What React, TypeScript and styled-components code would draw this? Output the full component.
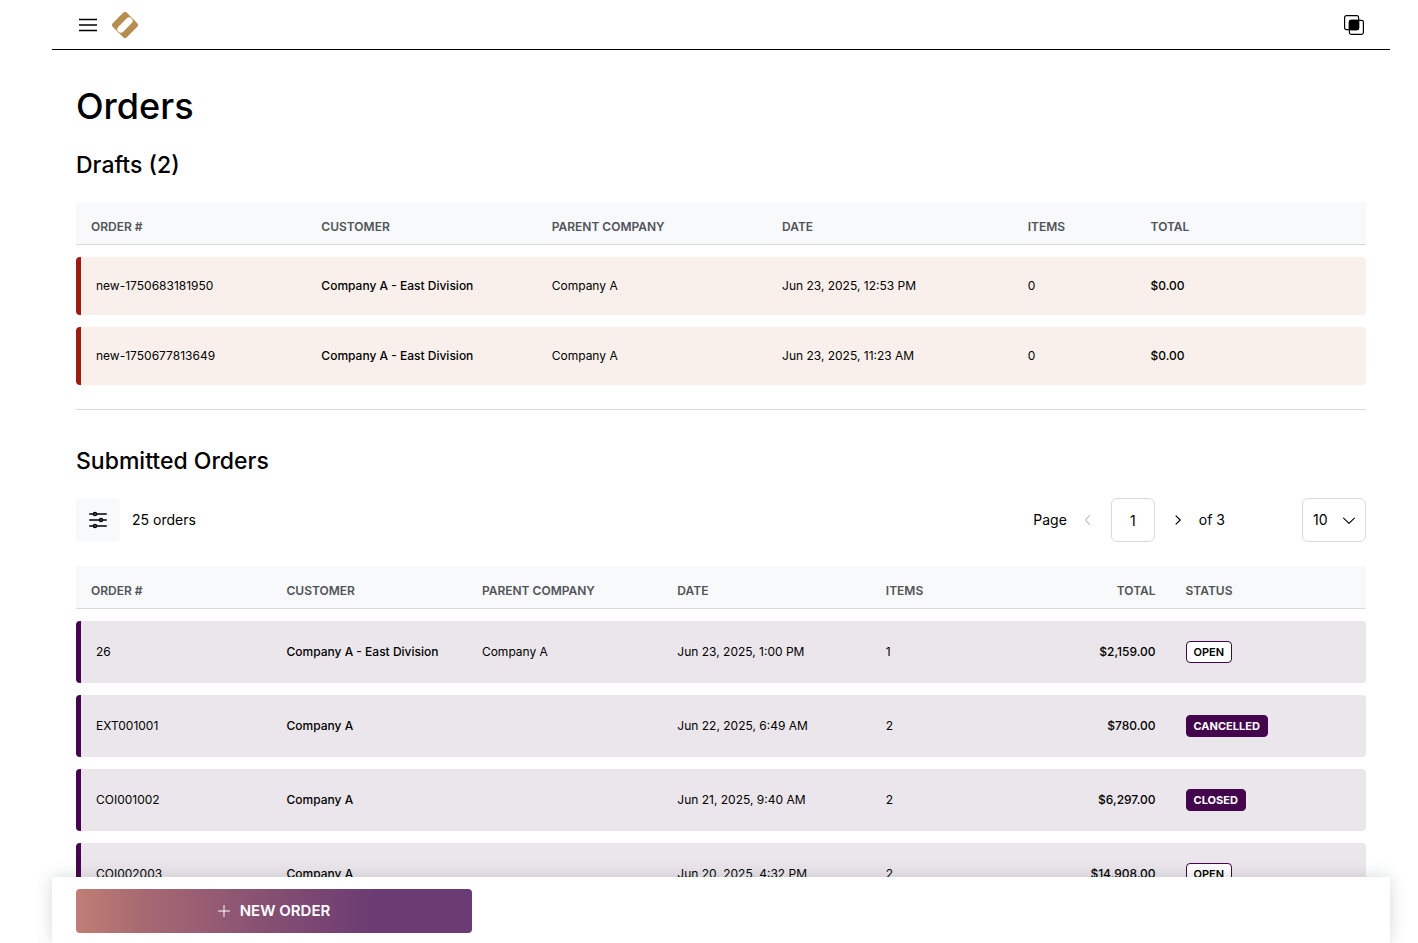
import React from "react";
import styled, { createGlobalStyle, css } from "styled-components";

const GlobalStyle = createGlobalStyle`
  *, *::before, *::after { box-sizing: border-box; }
  body {
    margin: 0;
    background: #fff;
    color: #000;
    font-family: Inter, "Liberation Sans", sans-serif;
    font-size: 14px;
    line-height: 20px;
  }
  button, input, select { font: inherit; color: inherit; }
`;

const Page = styled.div`
  padding: 0 28px 0 52px;
`;

const TopBar = styled.header`
  display: flex;
  align-items: center;
  justify-content: space-between;
  height: 50px;
  padding: 0 24px;
  border-bottom: 1px solid #000;
`;

const BarGroup = styled.div`
  display: flex;
  align-items: center;
  gap: 12px;
`;

const IconButton = styled.button`
  display: flex;
  align-items: center;
  justify-content: center;
  width: 24px;
  height: 24px;
  padding: 0;
  border: 0;
  background: none;
  cursor: pointer;

  &:disabled { color: #b4b6bb; cursor: default; }
`;

const HomeLink = styled.a`
  display: flex;
`;

const Content = styled.main`
  padding: 32px 24px 24px;
`;

const Title = styled.h1`
  margin: 0;
  font-size: 36px;
  font-weight: 500;
  line-height: 48px;
`;

const SectionTitle = styled.h2`
  margin: 18px 0 8px;
  font-size: 23px;
  font-weight: 500;
  line-height: 34px;
`;

const Divider = styled.hr`
  height: 1px;
  margin: 12px 0 34px;
  border: 0;
  background: #d8dae0;
`;

const Toolbar = styled.div`
  display: flex;
  align-items: center;
  justify-content: space-between;
  margin: 20px 0 12px;
`;

const FilterButton = styled(IconButton)`
  width: 44px;
  height: 44px;
  border-radius: 4px;
  background: #f8f9fb;
`;

const Pager = styled.nav`
  display: flex;
  align-items: center;
`;

const PageLabel = styled.label`
  margin-right: 8px;
`;

const PageInput = styled.input`
  width: 44px;
  height: 44px;
  margin: 0 12px;
  padding: 0;
  border: 1px solid #d8dae0;
  border-radius: 6px;
  background: #fff;
  text-align: center;
`;

const PageCount = styled.span`
  margin: 0 77px 0 8px;
`;

const SizeField = styled.div`
  display: grid;
  align-items: center;
  width: 64px;
  height: 44px;

  > * { grid-area: 1 / 1; }
  > svg { justify-self: end; margin-right: 11px; pointer-events: none; }
`;

const SizeSelect = styled.select`
  width: 100%;
  height: 44px;
  padding: 0 10px;
  border: 1px solid #d8dae0;
  border-radius: 6px;
  background: #fff;
  appearance: none;
`;

const Table = styled.table`
  width: 100%;
  table-layout: fixed;
  border-collapse: separate;
  border-spacing: 0 12px;
  font-size: 12px;
`;

const Column = styled.col<{ $width: number }>`
  width: ${(p) => p.$width}%;
`;

const HeadCell = styled.th<{ $right?: boolean }>`
  height: 43px;
  padding: 8px 15px 0;
  border-bottom: 1px solid #d8dae0;
  background: #f8f9fb;
  color: #505358;
  font-weight: 600;
  text-align: ${(p) => (p.$right ? "right" : "left")};
  white-space: nowrap;
`;

type Tone = "draft" | "order";

const tones = {
  draft: css`
    height: 58px;
    background: #faf0eb;
    --accent: #9c1c14;
  `,
  order: css`
    height: 62px;
    background: #ebe6eb;
    --accent: #43054b;
  `,
};

const Cell = styled.td<{ $tone: Tone; $right?: boolean; $strong?: boolean }>`
  ${(p) => tones[p.$tone]}
  padding: 0 15px;
  font-weight: ${(p) => (p.$strong ? 500 : 400)};
  text-align: ${(p) => (p.$right ? "right" : "left")};
  white-space: nowrap;

  &:first-child {
    border-left: 5px solid var(--accent);
    border-radius: 4px 0 0 4px;
  }
  &:last-child { border-radius: 0 4px 4px 0; }
`;

const Badge = styled.span<{ $filled: boolean }>`
  display: inline-block;
  padding: 0 7px;
  border: 1px solid #43054b;
  border-radius: 4px;
  background: ${(p) => (p.$filled ? "#43054b" : "#fff")};
  color: ${(p) => (p.$filled ? "#fff" : "#000")};
  font-size: 11px;
  font-weight: ${(p) => (p.$filled ? 700 : 600)};
  line-height: 20px;
  vertical-align: middle;
`;

const ActionBar = styled.footer`
  position: fixed;
  right: 28px;
  bottom: 0;
  left: 52px;
  padding: 12px 24px 10px;
  background: #fff;
  box-shadow: 0 0 16px rgba(50, 70, 70, 0.2);
`;

const NewOrderButton = styled.button`
  display: flex;
  align-items: center;
  justify-content: center;
  gap: 10px;
  width: 100%;
  max-width: 396px;
  height: 44px;
  padding: 0;
  border: 0;
  border-radius: 4px;
  background: linear-gradient(90deg, #c17e75 0%, #a86a72 16%, #6b3b73 75%);
  color: #fff;
  font-size: 15px;
  font-weight: 600;
  cursor: pointer;
`;

interface Draft {
  id: string;
  customer: string;
  parent: string;
  date: string;
  items: number;
  total: string;
}

interface Order extends Draft {
  status: "OPEN" | "CANCELLED" | "CLOSED";
}

const drafts: Draft[] = [
  { id: "new-1750683181950", customer: "Company A - East Division", parent: "Company A", date: "Jun 23, 2025, 12:53 PM", items: 0, total: "$0.00" },
  { id: "new-1750677813649", customer: "Company A - East Division", parent: "Company A", date: "Jun 23, 2025, 11:23 AM", items: 0, total: "$0.00" },
];

const orders: Order[] = [
  { id: "26", customer: "Company A - East Division", parent: "Company A", date: "Jun 23, 2025, 1:00 PM", items: 1, total: "$2,159.00", status: "OPEN" },
  { id: "EXT001001", customer: "Company A", parent: "", date: "Jun 22, 2025, 6:49 AM", items: 2, total: "$780.00", status: "CANCELLED" },
  { id: "COI001002", customer: "Company A", parent: "", date: "Jun 21, 2025, 9:40 AM", items: 2, total: "$6,297.00", status: "CLOSED" },
  { id: "COI002003", customer: "Company A", parent: "", date: "Jun 20, 2025, 4:32 PM", items: 2, total: "$14,908.00", status: "OPEN" },
];

const draftWeights = [15, 15, 15, 16, 8, 15];
const orderWeights = [15, 15, 15, 16, 8, 15, 15];

function Columns({ weights }: { weights: number[] }) {
  const sum = weights.reduce((a, b) => a + b, 0);
  return (
    <colgroup>
      {weights.map((w, i) => (
        <Column key={i} $width={(w / sum) * 100} />
      ))}
    </colgroup>
  );
}

const MenuIcon = () => (
  <svg width="24" height="24" viewBox="0 0 24 24" fill="none" stroke="currentColor" strokeWidth="1.5">
    <path d="M3 6.5h18M3 12h18M3 17.5h18" />
  </svg>
);

const Logo = () => (
  <svg width="26" height="26" viewBox="0 0 26 26">
    <g transform="rotate(45 13 13)">
      <rect x="3" y="3" width="20" height="20" rx="3" fill="#b68d50" />
      <rect x="9.5" y="3.7" width="7" height="18.6" rx="3.5" fill="#fff" />
    </g>
  </svg>
);

const OverlapIcon = () => (
  <svg width="20" height="20" viewBox="0 0 20 20" fill="none" stroke="#000" strokeWidth="1.2">
    <rect x="0.6" y="0.6" width="14" height="14" rx="1.8" />
    <rect x="5.4" y="5.4" width="14" height="14" rx="1.8" />
    <rect x="5.4" y="5.4" width="9.2" height="9.2" rx="1.4" fill="#000" />
  </svg>
);

const SlidersIcon = () => (
  <svg width="24" height="24" viewBox="0 0 24 24" fill="none" stroke="currentColor" strokeWidth="1.5" strokeLinecap="round">
    <path d="M3.75 6H7.5M10.5 6h9.75M3.75 12h9.75M16.5 12h3.75M3.75 18H7.5M10.5 18h9.75" />
    <circle cx="9" cy="6" r="1.5" fill="#999" />
    <circle cx="15" cy="12" r="1.5" fill="#999" />
    <circle cx="9" cy="18" r="1.5" fill="#999" />
  </svg>
);

const Chevron = ({ d }: { d: string }) => (
  <svg width="12" height="12" viewBox="0 0 12 12" fill="none" stroke="currentColor" strokeWidth="1.1" strokeLinecap="round" strokeLinejoin="round">
    <path d={d} />
  </svg>
);

const PlusIcon = () => (
  <svg width="12" height="12" viewBox="0 0 12 12" fill="none" stroke="currentColor" strokeWidth="1" strokeLinecap="round">
    <path d="M6 0.5v11M0.5 6h11" />
  </svg>
);

export default function App() {
  return (
    <>
      <GlobalStyle />
      <Page>
        <TopBar>
          <BarGroup>
            <IconButton aria-label="Menu"><MenuIcon /></IconButton>
            <HomeLink href="#" aria-label="Home"><Logo /></HomeLink>
          </BarGroup>
          <IconButton aria-label="Switch view"><OverlapIcon /></IconButton>
        </TopBar>
        <Content>
          <Title>Orders</Title>
          <SectionTitle>Drafts (2)</SectionTitle>
          <Table>
            <Columns weights={draftWeights} />
            <thead>
              <tr>
                <HeadCell>ORDER #</HeadCell>
                <HeadCell>CUSTOMER</HeadCell>
                <HeadCell>PARENT COMPANY</HeadCell>
                <HeadCell>DATE</HeadCell>
                <HeadCell>ITEMS</HeadCell>
                <HeadCell>TOTAL</HeadCell>
              </tr>
            </thead>
            <tbody>
              {drafts.map((d) => (
                <tr key={d.id}>
                  <Cell $tone="draft">{d.id}</Cell>
                  <Cell $tone="draft" $strong>{d.customer}</Cell>
                  <Cell $tone="draft">{d.parent}</Cell>
                  <Cell $tone="draft">{d.date}</Cell>
                  <Cell $tone="draft">{d.items}</Cell>
                  <Cell $tone="draft" $strong>{d.total}</Cell>
                </tr>
              ))}
            </tbody>
          </Table>
          <Divider />
          <SectionTitle>Submitted Orders</SectionTitle>
          <Toolbar>
            <BarGroup>
              <FilterButton aria-label="Filters"><SlidersIcon /></FilterButton>
              <span>25 orders</span>
            </BarGroup>
            <Pager aria-label="Pagination">
              <PageLabel htmlFor="page">Page</PageLabel>
              <IconButton aria-label="Previous page" disabled><Chevron d="M8.5 1.5 4.5 6 8.5 10.5" /></IconButton>
              <PageInput id="page" defaultValue="1" />
              <IconButton aria-label="Next page"><Chevron d="M3 1.8 7.2 6 3 10.2" /></IconButton>
              <PageCount>of 3</PageCount>
              <SizeField>
                <SizeSelect aria-label="Orders per page" defaultValue="10">
                  <option>10</option>
                  <option>25</option>
                  <option>50</option>
                </SizeSelect>
                <Chevron d="M0.6 4.2 6 9.4 11.4 4.2" />
              </SizeField>
            </Pager>
          </Toolbar>
          <Table>
            <Columns weights={orderWeights} />
            <thead>
              <tr>
                <HeadCell>ORDER #</HeadCell>
                <HeadCell>CUSTOMER</HeadCell>
                <HeadCell>PARENT COMPANY</HeadCell>
                <HeadCell>DATE</HeadCell>
                <HeadCell>ITEMS</HeadCell>
                <HeadCell $right>TOTAL</HeadCell>
                <HeadCell>STATUS</HeadCell>
              </tr>
            </thead>
            <tbody>
              {orders.map((o) => (
                <tr key={o.id}>
                  <Cell $tone="order">{o.id}</Cell>
                  <Cell $tone="order" $strong>{o.customer}</Cell>
                  <Cell $tone="order">{o.parent}</Cell>
                  <Cell $tone="order">{o.date}</Cell>
                  <Cell $tone="order">{o.items}</Cell>
                  <Cell $tone="order" $strong $right>{o.total}</Cell>
                  <Cell $tone="order"><Badge $filled={o.status !== "OPEN"}>{o.status}</Badge></Cell>
                </tr>
              ))}
            </tbody>
          </Table>
        </Content>
        <ActionBar>
          <NewOrderButton><PlusIcon />NEW ORDER</NewOrderButton>
        </ActionBar>
      </Page>
    </>
  );
}
